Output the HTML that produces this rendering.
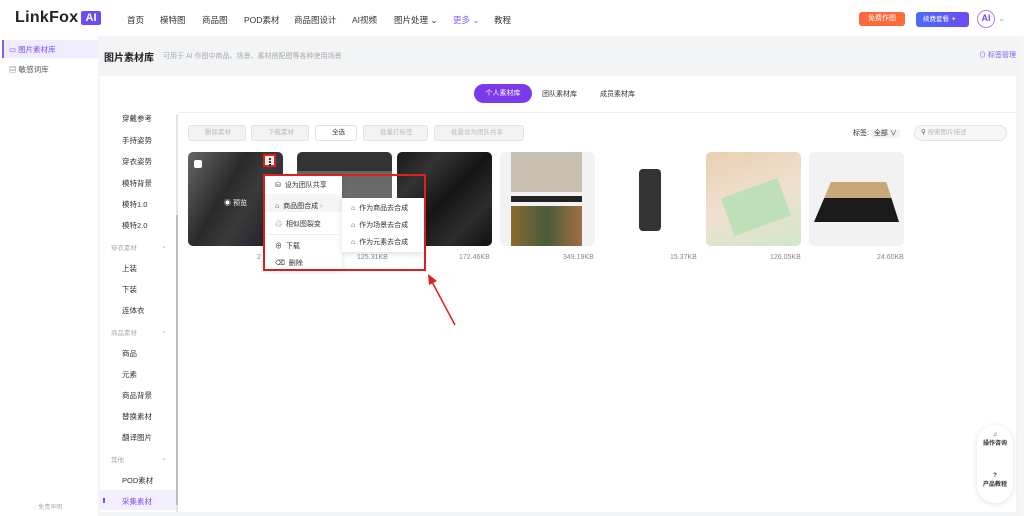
<!DOCTYPE html>
<html><head><meta charset="utf-8"><style>
*{box-sizing:border-box;margin:0;padding:0}
body{width:1024px;height:516px;overflow:hidden;background:#f3f4f6;font-family:"Liberation Sans","Noto Sans CJK SC",sans-serif;font-size:8px;color:#333;position:relative}
.a{position:absolute;white-space:nowrap}
.nav{left:0;top:0;width:1024px;height:36px;background:#fff}
.nav span{position:absolute;top:14px;font-size:8.5px;color:#333}
.side{left:0;top:36px;width:98px;height:480px;background:#fff}
.panel{left:100px;top:76px;width:916px;height:436px;background:#fff}
.sub span{position:absolute;left:122px;font-size:7.5px;color:#333}
.sub .g{left:111px;color:#aaa;font-size:6.5px}
.card{position:absolute;top:152px;width:95px;height:94px;border-radius:5px;background:#f4f4f4;overflow:hidden}
.sz{position:absolute;top:254px;font-size:7px;color:#888}
.btn{position:absolute;top:125px;height:16px;border:1px solid #e3e3e3;border-radius:3px;background:#f3f3f3;color:#bbb;font-size:6.5px;line-height:14px;padding-left:16px;white-space:nowrap}
.mi{position:absolute;font-size:7px;color:#333;white-space:nowrap}
</style></head><body>
<div class="a nav">
 <div class="a" style="left:15px;top:9px;font-size:16px;font-weight:bold;color:#222;letter-spacing:.3px">LinkFox</div>
 <div class="a" style="left:81px;top:11px;width:20px;height:14px;background:#6d4cf5;color:#fff;font-weight:bold;font-size:11px;text-align:center;line-height:14px;border-radius:2px">AI</div>
 <span style="left:127px">首页</span><span style="left:160px">模特图</span><span style="left:202px">商品图</span><span style="left:244px">POD素材</span><span style="left:294px">商品图设计</span><span style="left:352px">AI视频</span><span style="left:394px">图片处理 ⌄</span><span style="left:453px;color:#8a5cf6">更多 ⌄</span><span style="left:494px">教程</span>
 <div class="a" style="left:859px;top:12px;width:46px;height:14px;background:#ff6a3d;border-radius:3px;color:#fff;font-size:7px;text-align:center;line-height:14px">免费作图</div>
 <div class="a" style="left:916px;top:12px;width:53px;height:15px;background:linear-gradient(90deg,#4b6cf7,#6a4cf5);border-radius:3px;color:#fff;font-size:6.5px;line-height:15px;padding-left:7px">续费套餐 <i style="color:#ffd84a;font-style:normal">✦</i></div>
 <div class="a" style="left:977px;top:10px;width:18px;height:18px;border:1.5px solid #c07ef0;border-radius:50%;color:#6d4cf5;font-size:9px;font-weight:bold;text-align:center;line-height:15px">AI</div>
 <span style="left:998px;top:13px;color:#aaa">⌄</span>
</div>
<div class="a side">
 <div class="a" style="left:2px;top:4px;width:96px;height:18px;background:#f0ecff;border-left:2px solid #8a5cf6"></div>
 <div class="a" style="left:9px;top:8px;font-size:7.5px;color:#7c4df5">▭ 图片素材库</div>
 <div class="a" style="left:9px;top:28px;font-size:7.5px;color:#555">▤ 敏感词库</div>
 <div class="a" style="left:33px;top:466px;font-size:6px;color:#aaa">◌ 免责声明</div>
</div>
<div class="a" style="left:104px;top:49px;font-size:10px;font-weight:bold;color:#222">图片素材库</div>
<div class="a" style="left:163px;top:51px;font-size:7px;color:#aaa">可用于 AI 作图中商品、场景、素材搭配图等各种使用场景</div>
<div class="a" style="left:979px;top:50px;font-size:7px;color:#7c5cf5">⊙ 标签管理</div>
<div class="a panel"></div>
<div class="a" style="left:474px;top:84px;width:58px;height:19px;background:#7c3aed;border-radius:10px;color:#fff;font-size:7px;text-align:center;line-height:19px">个人素材库</div>
<div class="a" style="left:542px;top:89px;font-size:7px">团队素材库</div>
<div class="a" style="left:600px;top:89px;font-size:7px">成员素材库</div>
<div class="a" style="left:178px;top:112px;width:838px;height:1px;background:#f0f0f0"></div>
<div class="a" style="left:176px;top:114px;width:2px;height:398px;background:#e5e5e5"></div>
<div class="a" style="left:176px;top:215px;width:2px;height:290px;background:#bbb"></div>
<div class="sub">
<span style="top:113px">穿戴参考</span><span style="top:135px">手持姿势</span><span style="top:156px">穿衣姿势</span><span style="top:178px">模特背景</span><span style="top:199px">模特1.0</span><span style="top:220px">模特2.0</span>
<span class="g" style="top:242px">穿衣素材<i style="position:absolute;left:50px;font-style:normal">⌄</i></span>
<span style="top:263px">上装</span><span style="top:284px">下装</span><span style="top:305px">连体衣</span>
<span class="g" style="top:327px">商品素材<i style="position:absolute;left:50px;font-style:normal">⌄</i></span>
<span style="top:348px">商品</span><span style="top:369px">元素</span><span style="top:390px">商品背景</span><span style="top:411px">替换素材</span><span style="top:432px">翻译图片</span>
<span class="g" style="top:454px">其他<i style="position:absolute;left:50px;font-style:normal">⌄</i></span>
<span style="top:475px">POD素材</span>
<div class="a" style="left:100px;top:490px;width:76px;height:20px;background:#f3efff"></div>
<span style="top:496px;color:#7c4df5">采集素材</span>
<div class="a" style="left:103px;top:498px;width:2px;height:5px;background:#7c4df5"></div>
</div>
<div class="btn" style="left:188px;width:58px">删除素材</div>
<div class="btn" style="left:251px;width:58px">下载素材</div>
<div class="btn" style="left:315px;width:42px;background:#fff;color:#333">全选</div>
<div class="btn" style="left:363px;width:65px">批量打标签</div>
<div class="btn" style="left:434px;width:90px">批量设为团队共享</div>
<div class="a" style="left:853px;top:128px;font-size:7px">标签: <b style="font-weight:normal;background:#f3f3f3;padding:1px 3px">全部 ∨</b></div>
<div class="a" style="left:914px;top:125px;width:93px;height:16px;border:1px solid #e3e3e3;border-radius:8px;background:#f7f7f9;font-size:6.5px;color:#bbb;line-height:14px;padding-left:6px"><span style="color:#555">⚲</span> 搜索图片描述</div>
<div class="card" style="left:188px;background:linear-gradient(120deg,#666,#2a2a2a 40%,#3a3a3a 60%,#1a1a2a)"><div class="a" style="left:6px;top:8px;width:8px;height:8px;background:#fff;border-radius:2px"></div><div class="a" style="left:36px;top:46px;color:#fff;font-size:7px">◉ 预览</div></div>
<div class="a" style="left:263px;top:154px;width:13px;height:13px;border:2px solid #e02020;background:#eee"><div class="a" style="left:4px;top:2px;width:1.5px;height:1.5px;background:#333;box-shadow:0 3px #333,0 6px #333"></div></div>
<div class="card" style="left:297px;background:linear-gradient(#333 0 20%,#666 20%,#777)"></div>
<div class="card" style="left:397px;background:linear-gradient(135deg,#1a1a1a,#333,#151515,#2c2c2c,#111)"></div>
<div class="card" style="left:500px;background:#f2f2f2"><div class="a" style="left:11px;top:0;width:71px;height:40px;background:#c8c0b0"></div><div class="a" style="left:11px;top:44px;width:71px;height:6px;background:#222"></div><div class="a" style="left:11px;top:54px;width:71px;height:40px;background:linear-gradient(90deg,#8a6a30,#4a5a3a,#a07040)"></div></div>
<div class="card" style="left:602px;background:#fff"><div class="a" style="left:37px;top:17px;width:22px;height:62px;background:#333;border-radius:4px"></div></div>
<div class="card" style="left:706px;background:linear-gradient(160deg,#e8d0b0,#f0e0d0 50%,#d0e8c8)"><div class="a" style="left:20px;top:35px;width:60px;height:40px;background:#bde0b8;transform:rotate(-20deg)"></div></div>
<div class="card" style="left:809px;background:#f2f2f2"><div class="a" style="left:5px;top:30px;width:85px;height:40px;background:linear-gradient(#c8a878 0 40%,#1a1a1a 40%);clip-path:polygon(20% 0,85% 0,100% 100%,0 100%)"></div></div>
<div class="sz" style="left:257px">2</div><div class="sz" style="left:357px">125.31KB</div><div class="sz" style="left:459px">172.46KB</div><div class="sz" style="left:563px">349.19KB</div><div class="sz" style="left:670px">15.37KB</div><div class="sz" style="left:770px">126.05KB</div><div class="sz" style="left:877px">24.60KB</div>
<div class="a" style="left:263px;top:174px;width:163px;height:97px;border:2px solid #e02020"></div>
<div class="a" style="left:265px;top:176px;width:77px;height:93px;background:#fff;box-shadow:0 2px 6px rgba(0,0,0,.1)"></div>
<div class="a" style="left:265px;top:194px;width:77px;height:18px;background:#f5f5f5"></div>
<div class="a" style="left:342px;top:198px;width:82px;height:54px;background:#fff;box-shadow:0 2px 6px rgba(0,0,0,.12)"></div>
<div class="mi" style="left:275px;top:180px">⛁&nbsp; 设为团队共享</div>
<div class="mi" style="left:275px;top:201px">⌂&nbsp; 商品图合成 <span style="color:#999">›</span></div>
<div class="mi" style="left:275px;top:219px">♲&nbsp; 相似图裂变</div>
<div class="a" style="left:268px;top:234px;width:72px;height:1px;background:#eee"></div>
<div class="mi" style="left:275px;top:241px">⊕&nbsp; 下载</div>
<div class="mi" style="left:275px;top:258px">⌫&nbsp; 删除</div>
<div class="mi" style="left:351px;top:203px">⌂&nbsp; 作为商品去合成</div>
<div class="mi" style="left:351px;top:220px">⌂&nbsp; 作为场景去合成</div>
<div class="mi" style="left:351px;top:237px">⌂&nbsp; 作为元素去合成</div>
<svg class="a" style="left:425px;top:272px" width="35" height="58"><line x1="30" y1="53" x2="6" y2="8" stroke="#e02020" stroke-width="1.5"/><polygon points="3,2 12,9 4,13" fill="#e02020"/></svg>
<div class="a" style="left:977px;top:425px;width:36px;height:78px;background:#fff;border-radius:18px;box-shadow:0 1px 6px rgba(0,0,0,.12)"></div>
<div class="a" style="left:983px;top:432px;width:24px;text-align:center;font-size:6px;font-weight:bold;white-space:normal">♫<br>操作咨询</div>
<div class="a" style="left:983px;top:473px;width:24px;text-align:center;font-size:6px;font-weight:bold;white-space:normal">?<br>产品教程</div>
<div class="a" style="left:1018px;top:36px;width:6px;height:480px;background:#f6f6f6"></div>
</body></html>
